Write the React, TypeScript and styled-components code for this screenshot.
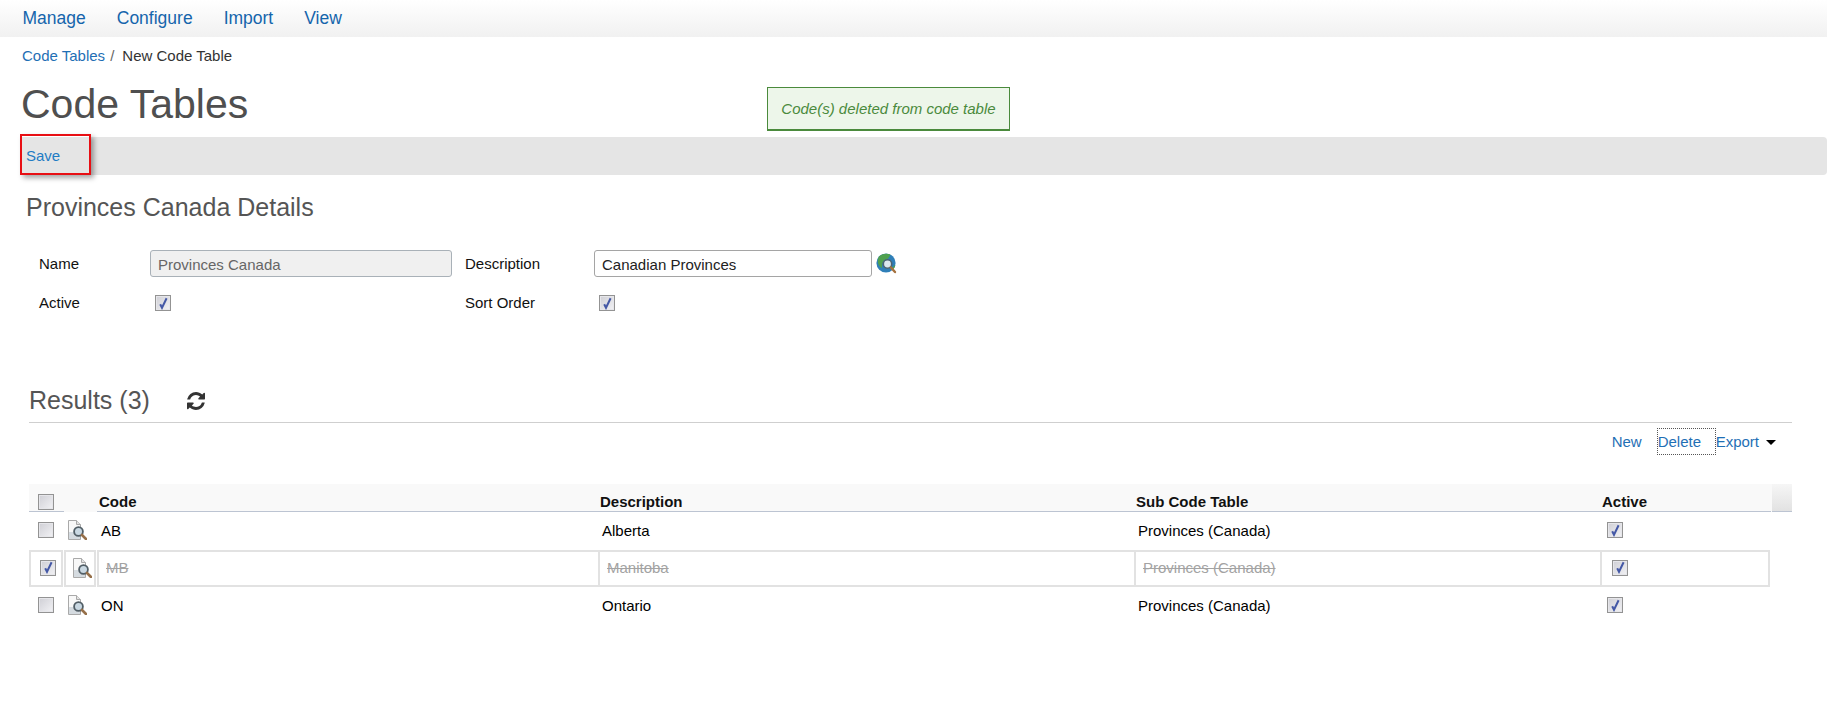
import styled, { createGlobalStyle } from "styled-components";

const GlobalStyle = createGlobalStyle`
    html, body {
        margin: 0;
        padding: 0;
        background: #fff;
        font-family: "Liberation Sans", Arial, sans-serif;
        font-size: 15px;
        color: #000;
    }
`;

const rows = [
    { code: "AB", description: "Alberta", sub: "Provinces (Canada)", selected: false },
    { code: "MB", description: "Manitoba", sub: "Provinces (Canada)", selected: true },
    { code: "ON", description: "Ontario", sub: "Provinces (Canada)", selected: false },
];

const CheckIcon = ({ checked }: { checked: boolean }) => (
    <CheckBox>
        {checked && (
            <svg width="12" height="13" viewBox="0 0 12 13">
                <path d="M3.2 7.2 L5 10.8 L9.6 1.2" fill="none" stroke="#4458a6" strokeWidth="2" />
            </svg>
        )}
    </CheckBox>
);

const DocSearchIcon = () => (
    <svg width="19" height="20" viewBox="0 0 19 20">
        <path d="M0.5 0.5 H8.5 L12.5 4.5 V19.5 H0.5 Z" fill="#f8f8f8" stroke="#a9a9a9" />
        <path d="M8.5 0.5 V4.5 H12.5" fill="#e2e2e2" stroke="#a9a9a9" />
        <path d="M1 12 H12 V19 H1 Z" fill="#d5dbe0" />
        <circle cx="10.5" cy="11.5" r="4.4" fill="#c9d8e2" stroke="#515e66" strokeWidth="1.8" />
        <path d="M14 15 L18 19" stroke="#96704a" strokeWidth="2.6" strokeLinecap="round" />
    </svg>
);

const GlobeIcon = () => (
    <svg width="21" height="21" viewBox="0 0 21 21">
        <circle cx="10" cy="10" r="9.6" fill="#2f7fb8" />
        <path d="M3 3.5 C6 0.5 11 0 14.5 1.5 C13 4 13 5.5 10 6.5 C6.5 7.5 6 11 6 15 C3 14 0 8 3 3.5 Z" fill="#4fa04e" />
        <path d="M15 17 C16 15 17 13 19.4 12 C19 14.5 17.5 16.5 15 17 Z" fill="#4fa04e" />
        <circle cx="11.5" cy="11" r="4.2" fill="#dbe7ee" stroke="#4a6472" strokeWidth="1.6" />
        <path d="M14.8 14.4 L19 19" stroke="#a5713e" strokeWidth="2.4" strokeLinecap="round" />
    </svg>
);

const RefreshIcon = () => (
    <svg width="18" height="18" viewBox="0 0 1536 1536">
        <path
            fill="#333"
            d="M1511 928q0 5-1 7-64 268-268 434.500t-478 166.500q-146 0-282.500-55t-243.500-157l-129 129q-19 19-45 19t-45-19-19-45v-448q0-26 19-45t45-19h448q26 0 45 19t19 45-19 45l-137 137q71 66 161 102t187 36q134 0 250-65t186-179q11-17 53-117 8-23 30-23h192q13 0 22.500 9.500t9.500 22.500zM1536 128v448q0 26-19 45t-45 19h-448q-26 0-45-19t-19-45 19-45l138-138q-148-137-349-137-134 0-250 65t-186 179q-11 17-53 117-8 23-30 23h-199q-13 0-22.500-9.500t-9.500-22.500v-7q65-268 270-434.500t480-166.500q146 0 284 55.500t245 156.500l130-129q19-19 45-19t45 19 19 45z"
        />
    </svg>
);

export default function App() {
    return (
        <Page>
            <GlobalStyle />
            <NavBar>
                <NavLink>Manage</NavLink>
                <NavLink>Configure</NavLink>
                <NavLink>Import</NavLink>
                <NavLink>View</NavLink>
            </NavBar>
            <Breadcrumb>
                <CrumbLink>Code Tables</CrumbLink>
                <CrumbDivider>/</CrumbDivider>
                <span>New Code Table</span>
            </Breadcrumb>
            <TitleRow>
                <PageTitle>Code Tables</PageTitle>
                <Notice>Code(s) deleted from code table</Notice>
            </TitleRow>
            <Toolbar>
                <SaveButton>Save</SaveButton>
            </Toolbar>
            <SectionTitle>Provinces Canada Details</SectionTitle>
            <FormGrid>
                <FormLabel>Name</FormLabel>
                <ReadonlyField>Provinces Canada</ReadonlyField>
                <FormLabel>Description</FormLabel>
                <FieldWithIcon>
                    <TextField>Canadian Provinces</TextField>
                    <GlobeIcon />
                </FieldWithIcon>
                <FormLabel>Active</FormLabel>
                <CheckCell>
                    <CheckIcon checked />
                </CheckCell>
                <FormLabel>Sort Order</FormLabel>
                <CheckCell>
                    <CheckIcon checked />
                </CheckCell>
            </FormGrid>
            <ResultsHeader>
                <ResultsTitle>Results (3)</ResultsTitle>
                <RefreshIcon />
            </ResultsHeader>
            <Actions>
                <ActionLink>New</ActionLink>
                <FocusedAction>Delete</FocusedAction>
                <ActionLink>Export</ActionLink>
                <Caret />
            </Actions>
            <Table>
                <HeaderRow>
                    <HeadCell $pad={9}>
                        <CheckIcon checked={false} />
                    </HeadCell>
                    <div />
                    <HeadCell $pad={2}>Code</HeadCell>
                    <HeadCell $pad={2}>Description</HeadCell>
                    <HeadCell $pad={2}>Sub Code Table</HeadCell>
                    <HeadCell $pad={2}>Active</HeadCell>
                    <ScrollCap />
                </HeaderRow>
                {rows.map((row) => (
                    <Row key={row.code} $selected={row.selected}>
                        <Cell $selected={row.selected} $pad={9}>
                            <CheckIcon checked={row.selected} />
                        </Cell>
                        <Cell $selected={row.selected} $pad={row.selected ? 7 : 4}>
                            <DocSearchIcon />
                        </Cell>
                        <TextCell $selected={row.selected} $pad={row.selected ? 7 : 4}>{row.code}</TextCell>
                        <TextCell $selected={row.selected} $pad={row.selected ? 7 : 4}>{row.description}</TextCell>
                        <TextCell $selected={row.selected} $pad={row.selected ? 7 : 4}>{row.sub}</TextCell>
                        <Cell $selected={row.selected} $pad={row.selected ? 10 : 7}>
                            <CheckIcon checked />
                        </Cell>
                    </Row>
                ))}
            </Table>
        </Page>
    );
}

const Page = styled.div`
    width: 1827px;
    height: 721px;
    overflow: hidden;
`;

const NavBar = styled.nav`
    height: 37px;
    display: flex;
    align-items: center;
    gap: 31px;
    padding-left: 22.5px;
    background: linear-gradient(#ffffff, #f1f1f1);
`;

const NavLink = styled.a`
    font-size: 17.5px;
    color: #1565ac;
`;

const Breadcrumb = styled.div`
    height: 20px;
    margin-top: 8px;
    padding-left: 22px;
    display: flex;
    align-items: center;
    font-size: 15px;
    color: #333;
`;

const CrumbLink = styled.a`
    color: #1f6fb5;
`;

const CrumbDivider = styled.span`
    margin: 0 8px 0 5px;
    color: #666;
`;

const TitleRow = styled.div`
    height: 72px;
    display: flex;
    align-items: flex-start;
    padding-left: 21px;
`;

const PageTitle = styled.h1`
    margin: 16px 0 0;
    width: 746px;
    font-size: 41px;
    line-height: 46px;
    font-weight: 400;
    color: #4f4f4f;
`;

const Notice = styled.div`
    margin-top: 22px;
    width: 243px;
    height: 44px;
    padding-bottom: 1px;
    box-sizing: border-box;
    display: flex;
    align-items: center;
    justify-content: center;
    background: #edf6ea;
    border: 1px solid #4a8a3c;
    border-bottom-width: 2px;
    font-size: 15px;
    font-style: italic;
    color: #4a8a3c;
`;

const Toolbar = styled.div`
    height: 38px;
    margin-left: 22px;
    border-radius: 0 4px 4px 0;
    background: #e5e5e5;
    display: flex;
`;

const SaveButton = styled.a`
    position: relative;
    left: -2px;
    top: -3px;
    width: 71px;
    height: 41px;
    box-sizing: border-box;
    padding: 1px 0 0 4px;
    display: flex;
    align-items: center;
    border: 2px solid #e80f14;
    box-shadow: 3px 3px 5px rgba(0, 0, 0, 0.35);
    font-size: 15px;
    color: #1f7cc4;
`;

const SectionTitle = styled.h2`
    margin: 18px 0 0 26px;
    font-size: 25px;
    line-height: 29px;
    font-weight: 400;
    color: #555;
`;

const FormGrid = styled.div`
    display: grid;
    grid-template-columns: 111px 315px 129px 1fr;
    grid-auto-rows: 39px;
    margin: 28px 0 0 39px;
    align-items: start;
`;

const FormLabel = styled.div`
    font-size: 15px;
    line-height: 27px;
    color: #111;
`;

const baseField = `
    box-sizing: border-box;
    height: 27px;
    padding: 1px 0 0 7px;
    display: flex;
    align-items: center;
    border-radius: 3px;
    font-size: 15px;
`;

const ReadonlyField = styled.div`
    ${baseField}
    width: 302px;
    border: 1px solid #a9b1b8;
    background: #f0f0f0;
    color: #666;
`;

const FieldWithIcon = styled.div`
    display: flex;
    align-items: center;
    gap: 4px;
`;

const TextField = styled.div`
    ${baseField}
    width: 278px;
    border: 1px solid #a5a5a5;
    background: #fff;
    color: #222;
`;

const CheckCell = styled.div`
    padding: 4px 0 0 5px;
`;

const CheckBox = styled.span`
    display: inline-flex;
    align-items: center;
    justify-content: center;
    box-sizing: border-box;
    width: 16px;
    height: 16px;
    border: 1px solid #939393;
    background: linear-gradient(135deg, #cfcfd5, #f2f2f5);
    box-shadow: inset 0 0 0 1px #e6e6ea;
    vertical-align: middle;
`;

const ResultsHeader = styled.div`
    margin: 51px 0 0 29px;
    width: 1763px;
    height: 44px;
    box-sizing: border-box;
    border-bottom: 1px solid #cfcfcf;
    display: flex;
    align-items: center;
    gap: 37px;
`;

const ResultsTitle = styled.h2`
    margin: 0;
    font-size: 25px;
    font-weight: 400;
    color: #555;
`;

const Actions = styled.div`
    width: 1776px;
    height: 34px;
    box-sizing: border-box;
    padding-top: 5px;
    display: flex;
    justify-content: flex-end;
    align-items: flex-start;
`;

const ActionLink = styled.a`
    line-height: 27px;
    font-size: 15px;
    color: #1f6fb5;
`;

const FocusedAction = styled(ActionLink)`
    box-sizing: border-box;
    width: 59px;
    height: 27px;
    line-height: 25px;
    margin: 0 0 0 15px;
    border: 1px dotted #555;
`;

const Caret = styled.span`
    width: 0;
    height: 0;
    margin: 12px 0 0 7px;
    border-left: 5px solid transparent;
    border-right: 5px solid transparent;
    border-top: 5px solid #000;
`;

const Table = styled.div`
    margin: 27px 0 0 29px;
    width: 1763px;
`;

const columns = "35px 33px 501px 536px 466px 171px 21px";

const HeaderRow = styled.div`
    display: grid;
    grid-template-columns: ${columns};
    height: 28px;
    background: #f9f9f9;
`;

const HeadCell = styled.div<{ $pad: number }>`
    display: flex;
    align-items: flex-end;
    box-sizing: border-box;
    padding: 0 0 1px ${(p) => p.$pad}px;
    border-bottom: 1px solid #bcc4d2;
    font-size: 15px;
    font-weight: 700;
    color: #111;
`;

const ScrollCap = styled.div`
    margin-left: 1px;
    border-bottom: 1px solid #bcc4d2;
    background: linear-gradient(#f6f6f6, #e2e2e2);
`;

const Row = styled.div<{ $selected: boolean }>`
    display: grid;
    grid-template-columns: ${columns};
    height: ${(p) => (p.$selected ? "37px" : "38px")};
    ${(p) => p.$selected && "color: #a3a3a3; text-decoration: line-through;"}
`;

const Cell = styled.div<{ $selected: boolean; $pad: number }>`
    display: flex;
    align-items: center;
    box-sizing: border-box;
    padding: 0 0 2px ${(p) => p.$pad}px;
    font-size: 15px;
    ${(p) => p.$selected && "border: 2px solid #e2e2e2; margin-right: 1px;"}
`;

const TextCell = styled(Cell)`
    ${(p) => p.$selected && "border-right: none; margin-right: 0;"}
`;
